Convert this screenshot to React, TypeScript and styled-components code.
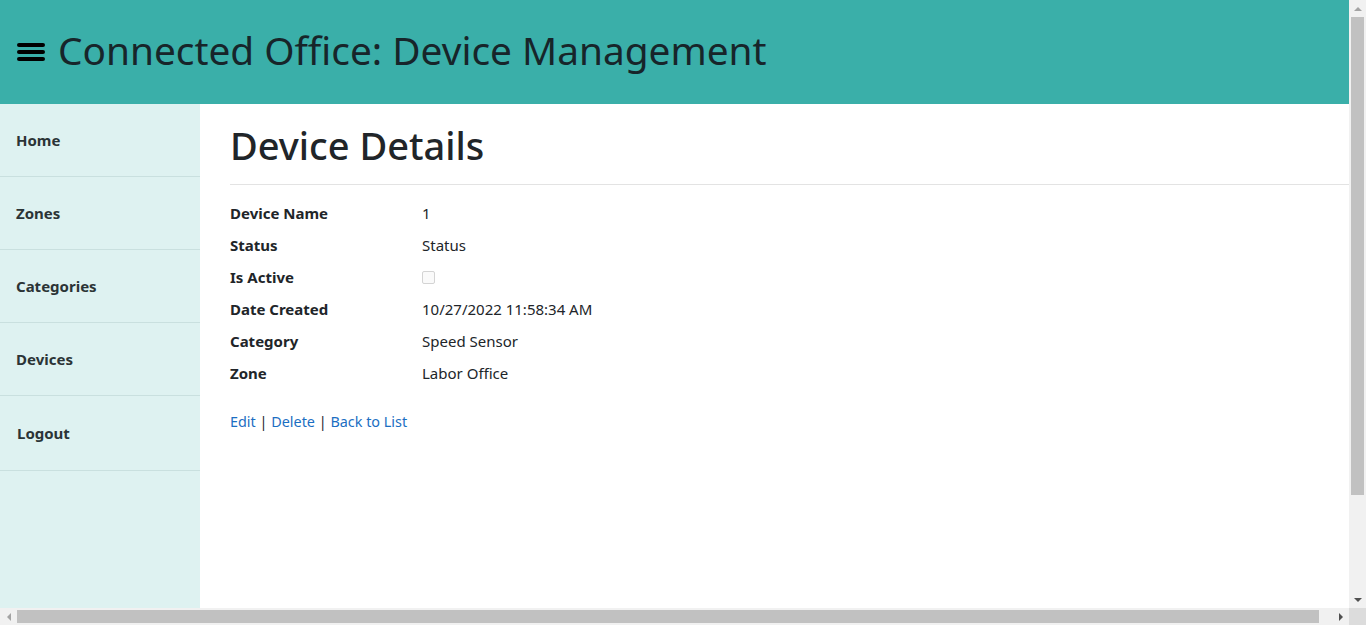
import React from 'react';
import styled, { createGlobalStyle } from 'styled-components';

const GlobalStyle = createGlobalStyle`
  html, body {
    margin: 0;
    padding: 0;
    overflow: hidden;
  }
  body {
    font-family: "Noto Sans", "Open Sans", sans-serif;
    color: #17252a;
    background: #fff;
  }
`;

/* window frame: visible page area plus the two scrollbars */
const Frame = styled.div`
  width: 1366px;
  height: 625px;
  display: grid;
  grid-template-columns: 1fr 17px;
  grid-template-rows: 1fr 17px;
`;

const Viewport = styled.div`
  overflow: hidden;
`;

const Page = styled.div`
  width: 1364px;
`;

const Header = styled.header`
  height: 104px;
  background: #3aafa9;
  display: flex;
  align-items: center;
  padding-left: 17px;
  gap: 13px;
`;

const Title = styled.h1`
  margin: 0;
  font-size: 38.8px;
  font-weight: 400;
  color: #17252a;
  line-height: 1;
  padding-bottom: 4px;
`;

const Body = styled.div`
  display: flex;
  height: 625px;
`;

const Sidebar = styled.nav`
  width: 200px;
  flex-shrink: 0;
  background: #def2f1;
  display: flex;
  flex-direction: column;
`;

const NavItem = styled.a<{ $tall?: boolean; $indent?: number }>`
  display: flex;
  align-items: center;
  height: ${(p) => (p.$tall ? 74 : 72)}px;
  padding-left: ${(p) => p.$indent ?? 16}px;
  border-bottom: 1px solid #c9e0df;
  font-size: 15px;
  font-weight: 700;
  color: #2b3436;
  text-decoration: none;
  cursor: pointer;
`;

const Main = styled.main`
  flex: 1;
  padding-left: 30px;
`;

const Heading = styled.h2`
  margin: 0;
  padding-top: 17px;
  font-size: 38px;
  font-weight: 500;
  line-height: 48px;
  color: #212529;
`;

const Rule = styled.hr`
  margin: 15px 0 16px;
  border: 0;
  border-top: 1px solid #e3e3e3;
`;

const DetailList = styled.dl`
  display: grid;
  grid-template-columns: 192px 1fr;
  row-gap: 8px;
  margin: 0;
`;

const Term = styled.dt`
  font-size: 15px;
  font-weight: 700;
  line-height: 24px;
  color: #212529;
`;

const Value = styled.dd`
  margin: 0;
  font-size: 15px;
  line-height: 24px;
  color: #212529;
  display: flex;
  align-items: center;
`;

const Check = styled.input`
  appearance: none;
  width: 13px;
  height: 13px;
  margin: 0;
  border: 1px solid #d4d4d4;
  border-radius: 2px;
  background: #fafafa;
`;

const Actions = styled.div`
  margin-top: 25px;
  font-size: 14.4px;
  line-height: 24px;
  color: #212529;
`;

const Link = styled.a`
  color: #1b6ec2;
  text-decoration: none;
  cursor: pointer;
`;

/* drawn scrollbars */
const Bar = styled.div<{ $vertical?: boolean }>`
  background: #f1f1f1;
  display: flex;
  flex-direction: ${(p) => (p.$vertical ? 'column' : 'row')};
`;

const Arrow = styled.div<{ $dir: 'up' | 'down' | 'left' | 'right' }>`
  width: 17px;
  height: 17px;
  flex-shrink: 0;
  display: flex;
  align-items: center;
  justify-content: center;

  &::after {
    content: '';
    width: 0;
    height: 0;
    border: 4px solid transparent;
    ${(p) =>
      p.$dir === 'up'
        ? 'border-bottom-color: #a3a3a3; margin-top: -4px;'
        : p.$dir === 'down'
        ? 'border-top-color: #505050; margin-bottom: -4px;'
        : p.$dir === 'left'
        ? 'border-right-color: #a3a3a3; margin-left: -4px;'
        : 'border-left-color: #505050; margin-right: -4px;'}
  }
`;

const Track = styled.div<{ $vertical?: boolean }>`
  flex: 1;
  display: flex;
  flex-direction: ${(p) => (p.$vertical ? 'column' : 'row')};
  padding: ${(p) => (p.$vertical ? '0 2px' : '2px 0')};
`;

const Thumb = styled.div`
  background: #c1c1c1;
`;

const Corner = styled.div`
  background: #dcdcdc;
`;

const Burger = () => (
  <svg width="28" height="20" viewBox="0 0 28 20">
    <g stroke="#000" strokeWidth="4" strokeLinecap="round">
      <line x1="2" y1="3" x2="26" y2="3" />
      <line x1="2" y1="10" x2="26" y2="10" />
      <line x1="2" y1="17" x2="26" y2="17" />
    </g>
  </svg>
);

const details: [string, React.ReactNode][] = [
  ['Device Name', '1'],
  ['Status', 'Status'],
  ['Is Active', <Check type="checkbox" disabled key="c" />],
  ['Date Created', '10/27/2022 11:58:34 AM'],
  ['Category', 'Speed Sensor'],
  ['Zone', 'Labor Office'],
];

export default function App() {
  return (
    <>
      <GlobalStyle />
      <Frame>
        <Viewport>
          <Page>
            <Header>
              <Burger />
              <Title>Connected Office: Device Management</Title>
            </Header>
            <Body>
              <Sidebar>
                <NavItem>Home</NavItem>
                <NavItem>Zones</NavItem>
                <NavItem>Categories</NavItem>
                <NavItem>Devices</NavItem>
                <NavItem $tall $indent={17}>Logout</NavItem>
              </Sidebar>
              <Main>
                <Heading>Device Details</Heading>
                <Rule />
                <DetailList>
                  {details.map(([k, v]) => (
                    <React.Fragment key={k}>
                      <Term>{k}</Term>
                      <Value>{v}</Value>
                    </React.Fragment>
                  ))}
                </DetailList>
                <Actions>
                  <Link>Edit</Link> | <Link>Delete</Link> | <Link>Back to List</Link>
                </Actions>
              </Main>
            </Body>
          </Page>
        </Viewport>
        <Bar $vertical>
          <Arrow $dir="up" />
          <Track $vertical>
            <Thumb style={{ height: '83.3%' }} />
          </Track>
          <Arrow $dir="down" />
        </Bar>
        <Bar>
          <Arrow $dir="left" />
          <Track>
            <Thumb style={{ width: '99%' }} />
          </Track>
          <Arrow $dir="right" />
        </Bar>
        <Corner />
      </Frame>
    </>
  );
}
